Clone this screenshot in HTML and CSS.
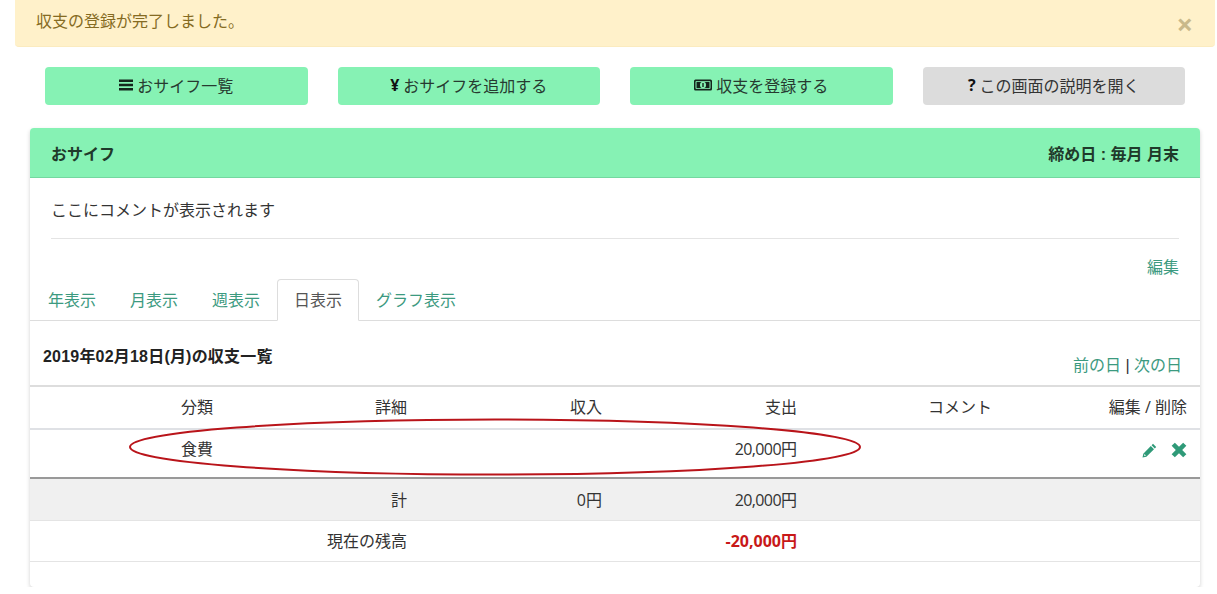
FILE: index.html
```html
<!DOCTYPE html>
<html lang="ja">
<head>
    <meta charset="UTF-8">
    <meta name="viewport" content="width=device-width, initial-scale=1.0">
    <title>おサイフ</title>
    <link rel="stylesheet" href="styles.css">
</head>
<body>
    <div class="alert">
        <span>収支の登録が完了しました。</span>
        <span class="alert-close">×</span>
    </div>

    <div class="actions">
        <a class="btn">
            <svg class="btn-icon" width="14" height="14" viewBox="0 0 14 14"><path d="M0 1.5h14v2.6H0zM0 5.7h14v2.6H0zM0 9.9h14v2.6H0z" fill="#14251c"/></svg>
            おサイフ一覧
        </a>
        <a class="btn"><b class="btn-mark">¥</b> おサイフを追加する</a>
        <a class="btn">
            <svg class="btn-icon" width="18" height="14" viewBox="0 0 18 14"><rect x="0" y="1.5" width="18" height="11" rx="1.5" fill="#14251c"/><rect x="1.5" y="3" width="15" height="8" rx="1" fill="#86f2b4"/><rect x="2.5" y="3.8" width="13" height="6.4" fill="#14251c"/><ellipse cx="9" cy="7" rx="3" ry="3.2" fill="#86f2b4"/><path d="M8.3 5.1h1.4v3.8H8.3z" fill="#14251c"/></svg>
            収支を登録する
        </a>
        <a class="btn btn-gray"><b class="btn-mark">?</b> この画面の説明を開く</a>
    </div>

    <div class="card">
        <div class="card-head">
            <span>おサイフ</span>
            <span>締め日 : 毎月 月末</span>
        </div>

        <div class="card-comment">
            <p>ここにコメントが表示されます</p>
        </div>
        <div class="edit-line"><a class="link">編集</a></div>

        <ul class="tabs">
            <li><a class="link">年表示</a></li>
            <li><a class="link">月表示</a></li>
            <li><a class="link">週表示</a></li>
            <li class="active"><a>日表示</a></li>
            <li><a class="link">グラフ表示</a></li>
        </ul>

        <div class="list-head">
            <h2>2019年02月18日(月)の収支一覧</h2>
            <div class="pager"><a class="link">前の日</a> | <a class="link">次の日</a></div>
        </div>

        <div class="table-wrap">
            <table>
                <thead>
                    <tr>
                        <th>分類</th>
                        <th>詳細</th>
                        <th>収入</th>
                        <th>支出</th>
                        <th>コメント</th>
                        <th>編集 / 削除</th>
                    </tr>
                </thead>
                <tbody>
                    <tr class="row-item">
                        <td>食費</td>
                        <td></td>
                        <td></td>
                        <td><span class="num">20,000</span>円</td>
                        <td></td>
                        <td class="row-icons">
                            <svg width="15" height="15" viewBox="0 0 15 15"><path d="M11 .8l3.2 3.2-1.4 1.4-3.2-3.2zM8.8 3l3.2 3.2-7.6 7.6-3.9.8.8-3.9zM2.5 11l-.4 1.9 1.9-.4z" fill="#2f9a78"/></svg>
                            <svg class="icon-del" width="16" height="16" viewBox="0 0 15 15"><path d="M3.6.6L7.5 4.5 11.4.6l3 3L10.5 7.5l3.9 3.9-3 3-3.9-3.9-3.9 3.9-3-3 3.9-3.9L.6 3.6z" fill="#2f9a78"/></svg>
                        </td>
                    </tr>
                    <tr class="row-total">
                        <td></td>
                        <td>計</td>
                        <td>0円</td>
                        <td><span class="num">20,000</span>円</td>
                        <td></td>
                        <td></td>
                    </tr>
                    <tr class="row-balance">
                        <td></td>
                        <td>現在の残高</td>
                        <td></td>
                        <td class="minus">-20,000円</td>
                        <td></td>
                        <td></td>
                    </tr>
                </tbody>
            </table>
            <!-- 赤丸の注釈 -->
            <svg class="circle-mark" width="734" height="60" viewBox="0 0 734 60"><ellipse cx="367" cy="30" rx="365" ry="27.5" fill="none" stroke="#b9141a" stroke-width="2"/></svg>
        </div>
    </div>
</body>
</html>
```

FILE: styles.css
```css
* {
    box-sizing: border-box;
}
body {
    margin: 0;
    font-family: "Open Sans", "Noto Sans CJK JP", sans-serif;
    font-size: 16px;
    color: #333;
    background: #fff;
}
.alert {
    display: flex;
    justify-content: space-between;
    height: 47px;
    margin: 0 2px 0 15px;
    padding: 9px 22px 0 21px;
    background: #fff1ca;
    border-bottom: 1px solid #fbebbf;
    border-radius: 0 0 4px 4px;
    color: #856b22;
    line-height: 24px;
}
.alert-close {
    margin-top: 3px;
    font-size: 29px;
    font-weight: bold;
    color: #c9b98a;
}
.actions {
    display: grid;
    grid-template-columns: repeat(4, 1fr);
    gap: 30px;
    margin: 20px 32px 23px 45px;
}
.btn {
    display: flex;
    align-items: center;
    justify-content: center;
    gap: 4px;
    height: 38px;
    padding-bottom: 2px;
    background: #86f2b4;
    border-radius: 4px;
    color: #263a30;
}
.btn-gray {
    background: #dcdcdc;
    color: #333;
}
.btn-mark {
    font-weight: bold;
    font-size: 16px;
    color: #111;
}
.btn-icon {
    flex: none;
}
.card {
    width: 1170px;
    height: 459px;
    margin-left: 30px;
    background: #fff;
    border-radius: 4px;
    box-shadow: 0 2px 4px rgba(0, 0, 0, 0.18);
}
.card-head {
    display: flex;
    justify-content: space-between;
    align-items: center;
    height: 50px;
    padding: 0 21px;
    background: #86f2b4;
    border-bottom: 1px solid #74d8a0;
    border-radius: 4px 4px 0 0;
    font-family: "Liberation Sans", "Noto Sans CJK JP", sans-serif;
    font-size: 16px;
    font-weight: bold;
    color: #1f3a2b;
}
.card-comment {
    margin: 0 21px;
    height: 61px;
    border-bottom: 1px solid #e4e4e4;
}
.card-comment p {
    margin: 0;
    padding-top: 20px;
    line-height: 24px;
    font-size: 16px;
}
.link {
    color: #3c9a80;
}
.edit-line {
    padding: 16px 21px 0 0;
    text-align: right;
    line-height: 24px;
}
.tabs {
    display: flex;
    height: 42px;
    margin: 0;
    padding: 0 1px;
    list-style: none;
    border-bottom: 1px solid #ddd;
}
.tabs li {
    height: 42px;
    padding: 8px 16px 0;
    border: 1px solid transparent;
    line-height: 24px;
}
.tabs li.active {
    background: #fff;
    border-color: #ddd #ddd #fff;
    border-radius: 4px 4px 0 0;
    color: #555;
}
.list-head {
    display: flex;
    justify-content: space-between;
    height: 66px;
    padding: 0 18px 0 13px;
    border-bottom: 2px solid #ddd;
}
.list-head h2 {
    margin: 0;
    padding-top: 25px;
    font-family: "Liberation Sans", "Noto Sans CJK JP", sans-serif;
    font-size: 16px;
    letter-spacing: 0.2px;
    line-height: 22px;
    color: #222;
}
.pager {
    padding-top: 33px;
    font-family: "Liberation Sans", "Noto Sans CJK JP", sans-serif;
    line-height: 24px;
}
.table-wrap {
    position: relative;
}
table {
    width: 100%;
    table-layout: fixed;
    border-collapse: collapse;
}
th, td {
    padding: 0 13px 0 12px;
    text-align: right;
    font-size: 16px;
    font-weight: normal;
    line-height: 24px;
}
th:first-child, td:first-child {
    padding-right: 12px;
}
th {
    padding-bottom: 2px;
}
thead tr {
    height: 42px;
    border-bottom: 2px solid #dfe1e5;
}
.row-item {
    height: 49px;
    border-bottom: 2px solid #999;
}
.row-item td {
    padding-bottom: 10px;
}
.row-total {
    height: 42px;
    background: #f0f0f0;
    border-bottom: 1px solid #e4e4e4;
}
.row-total td {
    padding-top: 2px;
}
.row-balance {
    height: 41px;
    border-bottom: 1px solid #e4e4e4;
}
.num {
    letter-spacing: -0.6px;
}
.minus {
    color: #c81818;
    font-weight: bold;
}
.row-icons svg {
    vertical-align: middle;
}
.icon-del {
    margin-left: 10px;
}
.circle-mark {
    position: absolute;
    left: 98px;
    top: 30px;
}
```
